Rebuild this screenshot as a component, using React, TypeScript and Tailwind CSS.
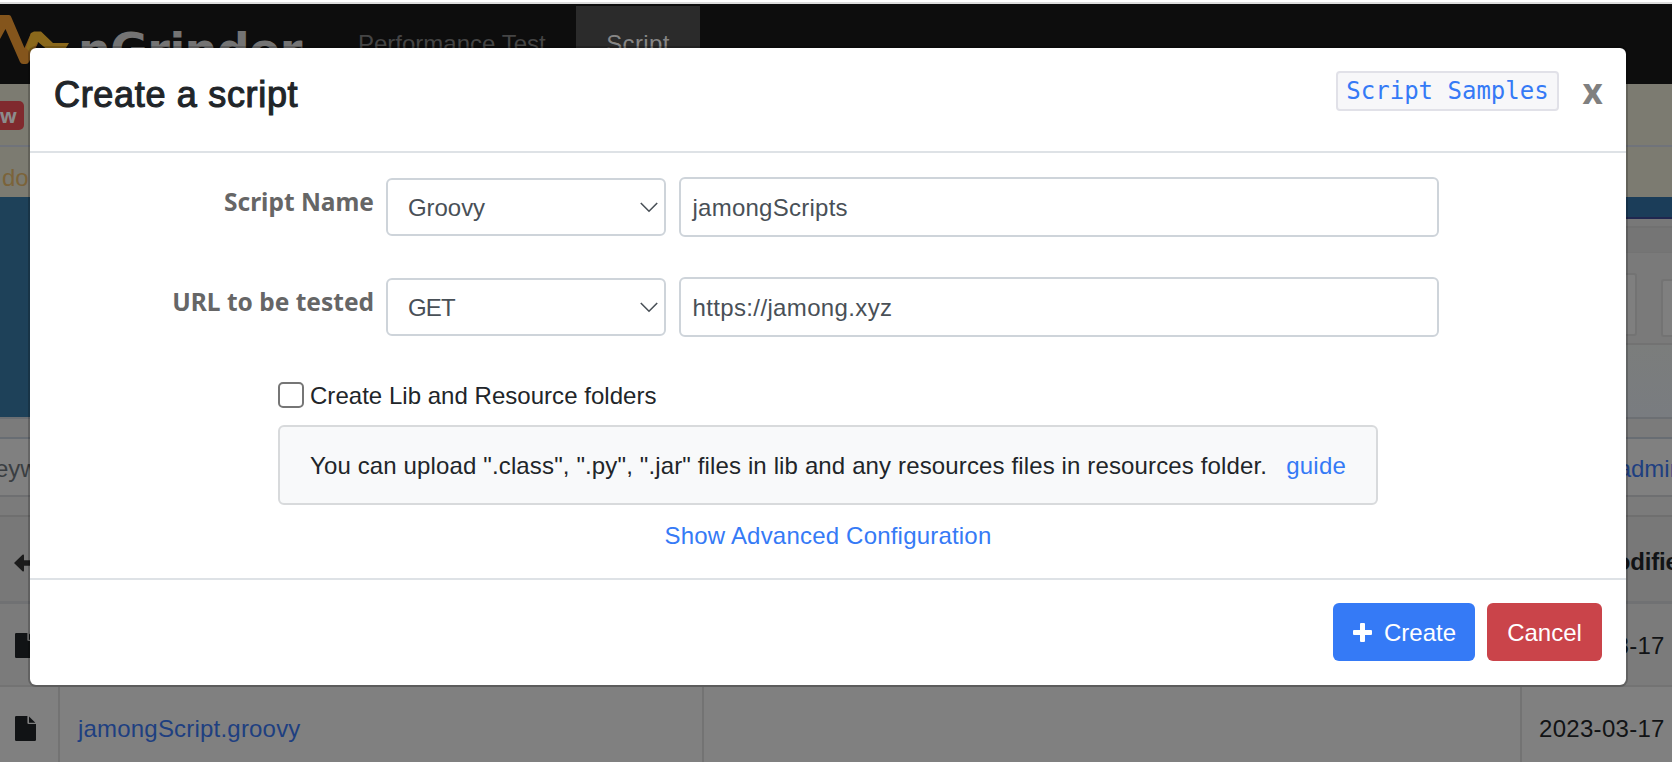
import React from 'react';

const sans = "font-['Liberation_Sans',Arial,sans-serif]";

function FileIcon({ className }: { className?: string }) {
  return (
    <svg width="21" height="25" viewBox="0 0 21 25" fill="#111315" className={className}>
      <path d="M1.3 0H12.4V6.8Q12.4 8 13.6 8H21V23.7Q21 25 19.7 25H1.3Q0 25 0 23.7V1.3Q0 0 1.3 0Z" />
      <path d="M14 0.6L20.4 6.8H14Z" />
    </svg>
  );
}

function Chevron() {
  return (
    <svg width="18" height="11" viewBox="0 0 18 11" fill="none" stroke="#495057" strokeWidth="1.6">
      <path d="M0.8 1L9 9.2L17.2 1" />
    </svg>
  );
}

function Logo() {
  return (
    <svg width="70" height="78" viewBox="0 0 70 78" className="shrink-0" fill="none">
      <path d="M0 9H9Q10.500 9 11 10.500L24.500 42L31 27L38 37L29 56Q28 58 26 58H23Q21 58 20 56L5.500 23L0 33Z" fill="#84551c" />
      <path d="M34 25.500H41L53 37H69L64 45H49L38 36L30 46L26 42L31 27Z" fill="#8a681b" />
    </svg>
  );
}

function PageHeader() {
  return (
    <header className="flex h-[80px] items-start bg-[#0d0d0d] pt-[2px]">
      <Logo />
      <span className="mt-[4px] ml-[8px] w-[237px] font-['DejaVu_Sans',sans-serif] text-[46px] leading-[80px] font-bold tracking-[-0.6px] text-[#747474]">
        nGrinder
      </span>
      <nav className="flex text-[24px] leading-[76px]">
        <a className="ml-[43px] w-[218px] whitespace-nowrap text-[#454545]">Performance Test</a>
        <a className="h-[78px] w-[124px] bg-[#2b2b2b] text-center tracking-[0.4px] text-[#868686]">Script</a>
      </nav>
    </header>
  );
}

function Announcement() {
  return (
    <section className="h-[113px] bg-[#7c7b71]">
      <div className="flex h-[63px] items-center border-b-2 border-[#70737a] pt-[17px]">
        <span className="-mt-[16px] -ml-[40px] h-[29px] w-[64px] rounded-[5px] bg-[#802a2e] pr-[7px] text-right font-['Noto_Sans',sans-serif] text-[20px] leading-[30px] font-bold text-[#8c8c8c]">
          new
        </span>
      </div>
      <p className="pl-[2px] text-[24px] leading-[62px] text-[#7b6339]">do</p>
    </section>
  );
}

function Banner() {
  return (
    <section className="flex h-[220px] justify-between bg-[#1e4159]">
      <div className="ml-auto w-[60px] bg-[#7a7a7a]">
        <div className="h-[22px] border-b-2 border-[#20274f] bg-[#1b3d59]" />
        <div className="h-[9px] border-b-2 border-[#717171] bg-[#787878]" />
        <div className="h-[25px] border-b border-[#737373] bg-[#757575]" />
        <div className="flex h-[92px] items-start justify-between border-b-2 border-[#727272] pt-[20px]">
          <div className="h-[63px] w-[25px] rounded-r-[3px] border-2 border-[#737373] bg-[#7f7f7f]" />
          <div className="mt-[6px] h-[58px] w-[11px] rounded-l-[3px] border-2 border-r-0 border-[#737373] bg-[#7f7f7f]" />
        </div>
        <div className="h-[72px] bg-gradient-to-b from-[#7b7d7c] to-[#797c80]" />
      </div>
    </section>
  );
}

function SearchBar() {
  return (
    <section className="h-[100px] border-y-2 border-t-[#6c6f73] border-b-[#6f6f6f] bg-[#7b7b7b] pt-[18px]">
      <div className="flex h-[60px] items-center justify-between border-y-2 border-t-[#686d73] border-b-[#6e6f71] bg-[#808080] text-[24px]">
        <span className="-ml-[21px] pt-[4px] text-[#3a3e42]">Keywords</span>
        <span className="-mr-[11px] pt-[3px] text-[#1e3f80]">admin</span>
      </div>
    </section>
  );
}

function FileTable() {
  return (
    <section className="text-[24px] text-[#111315]">
      <div className="flex h-[87px] items-center border-b-[3px] border-[#707173] bg-[#787878]">
        <svg width="30" height="18" viewBox="0 0 30 18" fill="#1b1b1b" className="mt-[7px] ml-[14px]">
          <path d="M0 9L8.500 0.8Q10 0 10 1.800V6.300H30V11.700H10V16.200Q10 18 8.500 17.200Z" />
        </svg>
        <span className="ml-auto w-[76px] pt-[5px] font-bold tracking-[-0.2px]">Modified</span>
      </div>
      <FileRow name="jamong.groovy" shade="bg-[#7b7b7b] h-[83px]" />
      <FileRow name="jamongScript.groovy" shade="bg-[#808080] h-[84px]" />
    </section>
  );
}

function FileRow({ name, shade }: { name: string; shade: string }) {
  return (
    <div className={`grid grid-cols-[60px_644px_818px_150px] border-b-2 border-[#737373] ${shade}`}>
      <div className="border-r-2 border-[#737373] pt-[29px] pl-[15px]">
        <FileIcon />
      </div>
      <a className="border-r-2 border-[#737373] pl-[18px] leading-[84px] tracking-[0.2px] text-[#1e3f80]">{name}</a>
      <div className="border-r-2 border-[#737373]" />
      <div className="pl-[17px] leading-[84px] tracking-[0.3px] whitespace-nowrap">2023-03-17</div>
    </div>
  );
}

type FieldProps = {
  label: string;
  labelClass: string;
  option: string;
  optionClass: string;
  value: string;
  valueClass: string;
};

function Field({ label, labelClass, option, optionClass, value, valueClass }: FieldProps) {
  return (
    <div className="flex h-[60px] items-center">
      <label
        className={`w-[344px] pb-[11px] text-right font-['Noto_Sans',sans-serif] text-[24.500px] leading-[36px] font-bold text-[#666666] ${labelClass}`}
      >
        {label}
      </label>
      <div className="ml-[12px] flex h-[58px] w-[280px] items-center justify-between rounded-[6px] border-2 border-[#ced4da] pr-[6px] pl-[20px] text-[24px] text-[#495057]">
        <span className={`pt-[2px] ${optionClass}`}>{option}</span>
        <Chevron />
      </div>
      <div
        className={`ml-[13px] flex h-[60px] w-[760px] items-center rounded-[6px] border-2 border-[#ced4da] pt-[2px] pl-[11.500px] text-[24px] text-[#495057] ${valueClass}`}
      >
        {value}
      </div>
    </div>
  );
}

function CreateScriptModal() {
  return (
    <div className="absolute top-[46px] left-[28px] flex h-[641px] w-[1600px] flex-col rounded-[8px] border-2 border-black/20 bg-white bg-clip-padding text-[#212529]">
      <div className="flex h-[105px] shrink-0 items-start border-b-2 border-[#dee2e6] pr-[23px] pl-[24px]">
        <h4 className="pt-[20px] text-[36px] leading-[54px] tracking-[0.68px] [-webkit-text-stroke:1.1px_#212529]">
          Create a script
        </h4>
        <a className="mt-[23px] ml-auto h-[40px] w-[223px] rounded-[4px] border-2 border-[#e1e1e8] bg-[#f7f7f9] text-center font-['DejaVu_Sans_Mono',monospace] text-[24px] leading-[37px] text-[#357af6]">
          Script Samples
        </a>
        <button className="mt-[19px] ml-[23px] w-[21px] font-['Noto_Sans',sans-serif] text-[35px] leading-[48px] font-bold text-[#808080]">
          x
        </button>
      </div>
      <div className="flex flex-1 flex-col pt-[24px]">
        <Field
          label="Script Name"
          labelClass="tracking-[0px]"
          option="Groovy"
          optionClass="tracking-[-0.05px]"
          value="jamongScripts"
          valueClass="tracking-[0.25px]"
        />
        <div className="h-[40px]" />
        <Field
          label="URL to be tested"
          labelClass="tracking-[0px]"
          option="GET"
          optionClass="tracking-[-0.8px]"
          value="https://jamong.xyz"
          valueClass="tracking-[0.36px]"
        />
        <label className="mt-[45px] ml-[248px] flex h-[26px] items-center text-[24px]">
          <span className="h-[26px] w-[26px] rounded-[5px] border-2 border-[#767676]" />
          <span className="ml-[6px] pt-[2px] tracking-[0.03px]">Create Lib and Resource folders</span>
        </label>
        <div className="mt-[17px] ml-[248px] flex h-[80px] w-[1100px] items-center rounded-[6px] border-2 border-[#d8dadc] bg-[#f8f9fa] pt-[2px] pr-[30px] pl-[30px] text-[24px] whitespace-nowrap">
          <span className="tracking-[0.136px]">
            You can upload ".class", ".py", ".jar" files in lib and any resources files in resources folder.
          </span>
          <a className="ml-auto tracking-[0.2px] text-[#357af6]">guide</a>
        </div>
        <a className="mt-[13px] text-center text-[24px] leading-[36px] tracking-[0.2px] text-[#357af6]">
          Show Advanced Configuration
        </a>
      </div>
      <div className="flex h-[107px] shrink-0 items-start justify-end gap-[12px] border-t-2 border-[#dee2e6] pt-[23px] pr-[24px] text-[24px] text-white">
        <button className="flex h-[58px] w-[142px] items-center rounded-[6px] bg-[#357af6] pl-[20px]">
          <svg width="19" height="19" viewBox="0 0 19 19" fill="white">
            <path d="M8 0H11Q12 0 12 1V7H18Q19 7 19 8V11Q19 12 18 12H12V18Q12 19 11 19H8Q7 19 7 18V12H1Q0 12 0 11V8Q0 7 1 7H7V1Q7 0 8 0Z" />
          </svg>
          <span className="ml-[12px] pt-[2px]">Create</span>
        </button>
        <button className="h-[58px] w-[115px] rounded-[6px] bg-[#ca444a] pt-[2px] text-center">Cancel</button>
      </div>
    </div>
  );
}

export default function App() {
  return (
    <main className={`relative h-[762px] w-[1672px] overflow-hidden bg-[#808080] ${sans}`}>
      <div className="h-[4px] border-b-2 border-[#dcdcdc] bg-white" />
      <PageHeader />
      <Announcement />
      <Banner />
      <SearchBar />
      <FileTable />
      <CreateScriptModal />
    </main>
  );
}
